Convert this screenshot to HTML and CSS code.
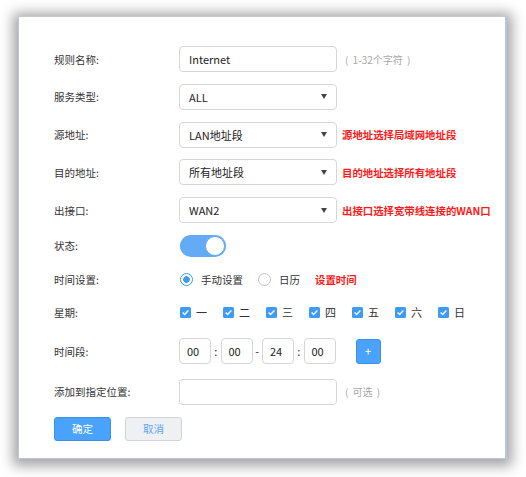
FILE: index.html
```html
<!DOCTYPE html>
<html>
<head>
<meta charset="utf-8">
<link rel="stylesheet" href="styles.css">
</head>
<body>
<div class="panel">
  <div class="row">
    <div class="label">规则名称:</div>
    <div class="field"><span>Internet</span></div>
    <div class="hint">( 1-32个字符 )</div>
  </div>
  <div class="row">
    <div class="label">服务类型:</div>
    <div class="field select"><span>ALL</span><i class="caret"></i></div>
  </div>
  <div class="row">
    <div class="label">源地址:</div>
    <div class="field select"><span>LAN地址段</span><i class="caret"></i></div>
    <div class="note">源地址选择局域网地址段</div>
  </div>
  <div class="row">
    <div class="label">目的地址:</div>
    <div class="field select"><span>所有地址段</span><i class="caret"></i></div>
    <div class="note">目的地址选择所有地址段</div>
  </div>
  <div class="row">
    <div class="label">出接口:</div>
    <div class="field select"><span>WAN2</span><i class="caret"></i></div>
    <div class="note">出接口选择宽带线连接的WAN口</div>
  </div>
  <div class="row short">
    <div class="label">状态:</div>
    <div class="toggle"><div class="knob"></div></div>
  </div>
  <div class="row short">
    <div class="label">时间设置:</div>
    <div class="radio on"></div><span class="opt">手动设置</span>
    <div class="radio off"></div><span class="opt">日历</span>
    <span class="note note-time">设置时间</span>
  </div>
  <div class="row week">
    <div class="label">星期:</div>
    <div class="days">
      <div class="day"><svg class="cb" viewBox="0 0 11 11"><rect width="11" height="11" rx="1.5" fill="#3d9bf3"/><path d="M2.6 5.6 L4.6 7.5 L8.4 3.6" stroke="#fff" stroke-width="1.4" fill="none"/></svg><span>一</span></div>
      <div class="day"><svg class="cb" viewBox="0 0 11 11"><rect width="11" height="11" rx="1.5" fill="#3d9bf3"/><path d="M2.6 5.6 L4.6 7.5 L8.4 3.6" stroke="#fff" stroke-width="1.4" fill="none"/></svg><span>二</span></div>
      <div class="day"><svg class="cb" viewBox="0 0 11 11"><rect width="11" height="11" rx="1.5" fill="#3d9bf3"/><path d="M2.6 5.6 L4.6 7.5 L8.4 3.6" stroke="#fff" stroke-width="1.4" fill="none"/></svg><span>三</span></div>
      <div class="day"><svg class="cb" viewBox="0 0 11 11"><rect width="11" height="11" rx="1.5" fill="#3d9bf3"/><path d="M2.6 5.6 L4.6 7.5 L8.4 3.6" stroke="#fff" stroke-width="1.4" fill="none"/></svg><span>四</span></div>
      <div class="day"><svg class="cb" viewBox="0 0 11 11"><rect width="11" height="11" rx="1.5" fill="#3d9bf3"/><path d="M2.6 5.6 L4.6 7.5 L8.4 3.6" stroke="#fff" stroke-width="1.4" fill="none"/></svg><span>五</span></div>
      <div class="day"><svg class="cb" viewBox="0 0 11 11"><rect width="11" height="11" rx="1.5" fill="#3d9bf3"/><path d="M2.6 5.6 L4.6 7.5 L8.4 3.6" stroke="#fff" stroke-width="1.4" fill="none"/></svg><span>六</span></div>
      <div class="day"><svg class="cb" viewBox="0 0 11 11"><rect width="11" height="11" rx="1.5" fill="#3d9bf3"/><path d="M2.6 5.6 L4.6 7.5 L8.4 3.6" stroke="#fff" stroke-width="1.4" fill="none"/></svg><span>日</span></div>
    </div>
  </div>
  <div class="row times">
    <div class="label">时间段:</div>
    <div class="tbox">00</div><span class="sep">:</span>
    <div class="tbox">00</div><span class="sep">-</span>
    <div class="tbox">24</div><span class="sep">:</span>
    <div class="tbox">00</div>
    <div class="plus">+</div>
  </div>
  <div class="row pos">
    <div class="label">添加到指定位置:</div>
    <div class="field"></div>
    <div class="hint">( 可选 )</div>
  </div>
  <div class="buttons">
    <div class="btn primary">确定</div>
    <div class="btn cancel">取消</div>
  </div>
</div>
</body>
</html>
```

FILE: styles.css
```css
html, body {
  margin: 0;
  padding: 0;
  background: #ffffff;
}
body {
  font-family: "Noto Sans CJK SC", "Noto Sans", sans-serif;
  font-size: 10.5px;
  color: #333;
  min-height: 477px;
  padding-top: 16px;
  box-sizing: border-box;
}
.panel {
  margin: 0 0 0 18px;
  width: 451px;
  height: 412px;
  background: #fff;
  border: 1px solid #b8c8dc;
  border-top-color: #c8c8c8;
  border-right: 2px solid #b4c6dc;
  box-shadow: 0 2px 12px 5px rgba(0, 0, 0, 0.36);
  padding: 29px 0 0 35px;
  box-sizing: content-box;
  display: flex;
  flex-direction: column;
  gap: 11.75px;
}
.row {
  display: flex;
  align-items: center;
  height: 26px;
}
.row.short { height: 22px; }
.row.week { height: 20px; }
.row.times { margin-top: 4px; }
.row.pos { margin-top: 3px; }
.label {
  width: 125px;
  flex: none;
  color: #333;
}
.field {
  height: 24px;
  border: 1px solid #d6d6d6;
  border-radius: 4px;
  display: flex;
  align-items: center;
  padding: 0 0 0 9px;
  box-sizing: content-box;
  width: 147px;
  font-size: 11px;
  color: #222;
}
.field.select { justify-content: space-between; }
.caret {
  width: 0;
  height: 0;
  border-left: 3.5px solid transparent;
  border-right: 3.5px solid transparent;
  border-top: 5px solid #444;
  margin-right: 9px;
}
.hint {
  margin-left: 8px;
  color: #a8a8a8;
  font-size: 10px;
  word-spacing: 2px;
}
.note {
  margin-left: 5px;
  color: #ff1a1a;
  font-weight: bold;
  font-size: 10.4px;
}
.note-time { margin-left: 0; }
.toggle {
  width: 46px;
  height: 22px;
  border-radius: 11px;
  background: #63acf5;
  position: relative;
  margin-left: 1px;
}
.knob {
  position: absolute;
  right: 1px;
  top: 1px;
  width: 18px;
  height: 18px;
  border-radius: 50%;
  background: #fff;
  border: 1px solid #63acf5;
}
.radio {
  width: 13px;
  height: 13px;
  border-radius: 50%;
  box-sizing: border-box;
  margin-left: 1px;
  flex: none;
}
.radio.on {
  border: 1.5px solid #3d9bf3;
  background: radial-gradient(circle, #3d9bf3 0, #3d9bf3 3px, #fff 3.5px);
}
.radio.off {
  border: 1px solid #c4c4c4;
  margin-left: 0;
}
.opt {
  margin-left: 8px;
  margin-right: 15px;
  color: #333;
}
.days {
  display: flex;
  margin-left: 1px;
}
.day {
  width: 43px;
  display: flex;
  align-items: center;
}
.cb {
  width: 11px;
  height: 11px;
  flex: none;
}
.day span {
  margin-left: 5px;
  color: #333;
  font-size: 11px;
}
.tbox {
  border: 1px solid #d6d6d6;
  border-radius: 4px;
  display: flex;
  align-items: center;
  padding-left: 7px;
  box-sizing: border-box;
  height: 26px;
  width: 32px;
  font-size: 11px;
  color: #222;
}
.sep {
  width: 9.5px;
  text-align: center;
  font-size: 11px;
  color: #333;
}
.plus {
  margin-left: 20px;
  width: 25px;
  height: 25px;
  border-radius: 3px;
  background: #4ba2fb;
  border: 1px solid #3d93ea;
  box-sizing: border-box;
  color: #fff;
  font-size: 11px;
  display: flex;
  align-items: center;
  justify-content: center;
}
.buttons {
  display: flex;
  gap: 14px;
}
.btn {
  width: 57px;
  height: 24px;
  box-sizing: border-box;
  border-radius: 3px;
  display: flex;
  align-items: center;
  justify-content: center;
  font-size: 10.5px;
}
.btn.primary {
  background: #4aa3fb;
  border: 1px solid #3b91e6;
  color: #fff;
}
.btn.cancel {
  background: #eef0f3;
  border: 1px solid #d0d3d8;
  color: #5ba5ee;
}
```
